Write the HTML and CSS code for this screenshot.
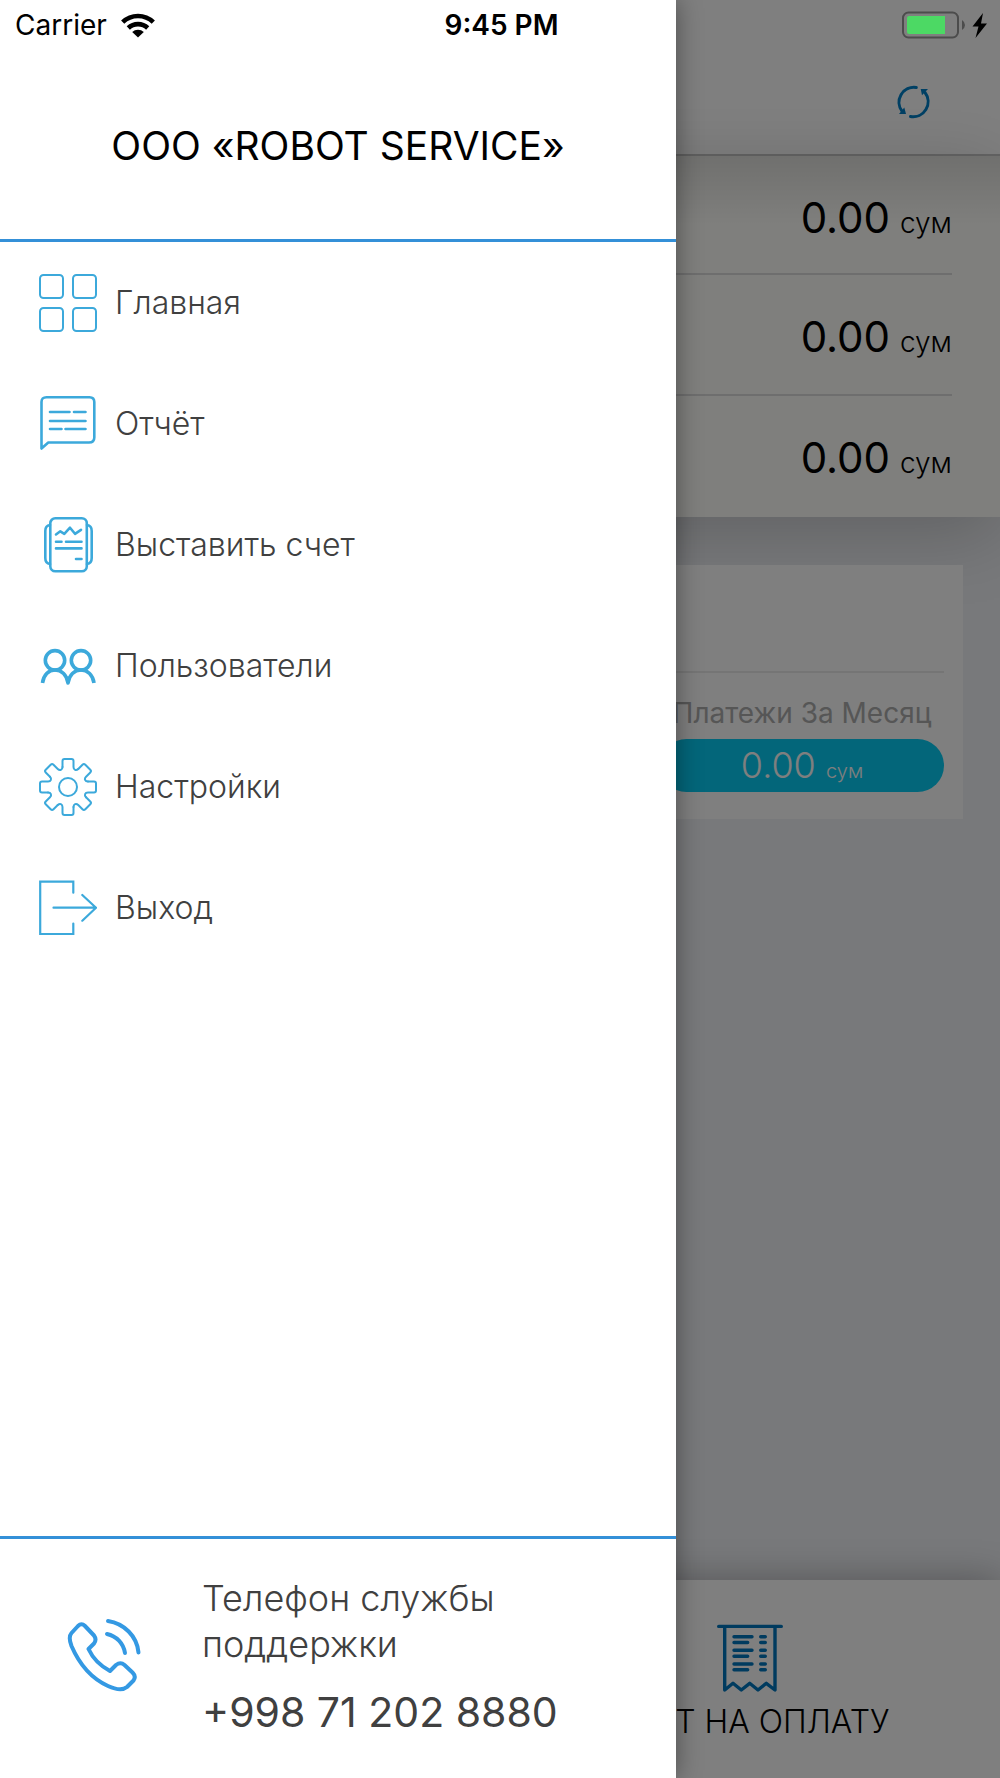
FILE: index.html
```html
<!DOCTYPE html>
<html lang="ru">
<head>
    <meta charset="UTF-8">
    <meta name="viewport" content="width=device-width, initial-scale=1.0">
    <title>ROBOT SERVICE</title>
    <link rel="stylesheet" href="styles.css">
</head>
<body>
    <div class="screen">
        <header class="topbar">
            <button class="refresh-btn" aria-label="Обновить">
                <svg width="40" height="36" viewBox="0 0 40 36" fill="none" stroke="#0080c8" stroke-width="3">
                    <path d="M22.3 3.4A15 15 0 0 0 8.2 27.5" stroke-linecap="round"/>
                    <path d="M16.5 32.4A15 15 0 0 0 31 8.5" stroke-linecap="round"/>
                    <path d="M5 30L12 30L10.3 23.5Z M26.7 5L34 5L28 11.3Z" fill="#0080c8" stroke="none"/>
                </svg>
            </button>
        </header>

        <section class="summary">
            <div class="amount">0.00 <small>сум</small></div>
            <div class="amount">0.00 <small>сум</small></div>
            <div class="amount">0.00 <small>сум</small></div>
        </section>

        <section class="card">
            <div class="card-head"></div>
            <div class="card-column">
                <div class="card-label">Платежи За Месяц</div>
                <div class="pill">0.00 <small>сум</small></div>
            </div>
        </section>

        <nav class="tabbar">
            <a class="tab" href="#invoice">
                <svg width="66" height="69" viewBox="0 0 66 69" fill="none" stroke="#0076be" stroke-width="3.4" stroke-linecap="round" stroke-linejoin="round">
                    <path d="M1.7 2.4H64.3M7.7 3V66L16 59.3L24.3 66L32.7 59.3L41 66L49.3 59.3L58 66V3"/>
                    <path d="M17 12.7H35M17 18.5H30.7M17 26.2H35M17 32.2H30.7M17 40H35M17 45.8H30.7"/>
                    <path d="M43.7 12.7H48.3M43.7 18.5H48.3M43.7 26.2H48.3M43.7 32.2H48.3M43.7 40H48.3M43.7 45.8H48.3"/>
                </svg>
                <span>СЧЕТ НА ОПЛАТУ</span>
            </a>
        </nav>
    </div>

    <div class="overlay"></div>

    <aside class="drawer">
        <div class="drawer-head">
            <h1>ООО «ROBOT SERVICE»</h1>
        </div>

        <nav class="menu">
            <a href="#home">
                <svg viewBox="0 0 58 58" stroke-width="2">
                    <rect x="1" y="1" width="23" height="23" rx="3.5"/>
                    <rect x="34" y="1" width="23" height="23" rx="3.5"/>
                    <rect x="1" y="34" width="23" height="23" rx="3.5"/>
                    <rect x="34" y="34" width="23" height="23" rx="3.5"/>
                </svg>
                Главная
            </a>
            <a href="#report">
                <svg viewBox="0 0 58 58" stroke-width="2.6">
                    <path d="M2.5 53.5V7Q2.5 2.2 7.5 2.2H50.5Q55.3 2.2 55.3 7V42.5Q55.3 47.5 50 47.5H9.3Z"/>
                    <path d="M11 17H30.5M35 17H46.5M11 26H46.5M11 34H22.5M26.5 34H46.5"/>
                </svg>
                Отчёт
            </a>
            <a href="#bill">
                <svg viewBox="0 0 58 58" stroke-width="2.6">
                    <rect x="11.3" y="2.3" width="36.5" height="53" rx="5"/>
                    <path d="M11 9Q6.3 9.5 6.3 15V42Q6.3 47.5 11 48M48 9Q52.7 9.5 52.7 15V42Q52.7 47.5 48 48"/>
                    <path d="M17 18.5L21.3 15.3L25.3 17.8L31 11.7L36 17.8L42 13.8"/>
                    <path d="M17 25.8H22.5M27 25.8H42.5M17 32.4H42.5M37 43H42.5"/>
                </svg>
                Выставить счет
            </a>
            <a href="#users">
                <svg viewBox="0 0 58 58" stroke-width="3.6">
                    <circle cx="16" cy="23.3" r="9.7"/>
                    <circle cx="42" cy="23.3" r="9.7"/>
                    <path stroke-linecap="butt" d="M3.5 46C4.5 38 9.5 33 16 33S28 38 29 46C30 38 35.5 33 42 33S54 38 55 46"/>
                </svg>
                Пользователи
            </a>
            <a href="#settings">
                <svg viewBox="0 0 58 58" stroke-width="2">
                    <defs>
                        <path id="tooth" d="M-5.5 -20V-26Q-5.5 -28 -3.5 -28H3.5Q5.5 -28 5.5 -26V-20C5.5 -17 8.1 -15.9 10.25 -18.03"/>
                    </defs>
                    <g transform="translate(29 29)">
                        <circle r="9"/>
                        <use href="#tooth"/>
                        <use href="#tooth" transform="rotate(45)"/>
                        <use href="#tooth" transform="rotate(90)"/>
                        <use href="#tooth" transform="rotate(135)"/>
                        <use href="#tooth" transform="rotate(180)"/>
                        <use href="#tooth" transform="rotate(225)"/>
                        <use href="#tooth" transform="rotate(270)"/>
                        <use href="#tooth" transform="rotate(315)"/>
                    </g>
                </svg>
                Настройки
            </a>
            <a href="#logout">
                <svg viewBox="0 0 58 58" stroke-width="2.2">
                    <path stroke-linejoin="miter" d="M34.3 13.7V2.7H1.2V55H34.3V44.5"/>
                    <path d="M14.5 28.7H57M43.3 16L57 28.7L43.3 41.7"/>
                </svg>
                Выход
            </a>
        </nav>

        <div class="support">
            <svg width="76" height="76" viewBox="0 0 76 76" fill="none" stroke="#3499e3" stroke-width="4" stroke-linecap="round" stroke-linejoin="round">
                <path d="M5.5 15L12 8Q15.5 4.5 19 8L28 17.5Q31 21.5 28 25.5L22.5 31Q29 45 44 53L50 47Q54.5 43.5 58.5 47L66.5 54.5Q70.5 58.5 67.5 62.5L61 69Q55 74 42 68Q18 57 5.5 28Q2 19 5.5 15Z"/>
                <path d="M42 3C58 5.5 71 18 72.5 34.5M41 16C50.5 18 57.5 25.5 59 35"/>
            </svg>
            <div>
                <p>Телефон службы поддержки</p>
                <a class="phone" href="tel:+998712028880">+998 71 202 8880</a>
            </div>
        </div>
    </aside>

    <div class="status">
        <div class="carrier">
            <span>Carrier</span>
            <svg width="34" height="25" viewBox="0 0 34 25" fill="none" stroke="#000" stroke-width="4.6">
                <path d="M1.7 9.2A22 22 0 0 1 32.3 9.2M7.3 15A14 14 0 0 1 26.7 15"/>
                <path d="M17 24.5L11.2 19A8.5 8.5 0 0 1 22.8 19Z" fill="#000" stroke="none"/>
            </svg>
        </div>
        <time>9:45 PM</time>
        <svg class="battery" width="86" height="28" viewBox="0 0 86 28">
            <rect x="1" y="1.5" width="55" height="25" rx="5.5" fill="none" stroke="#4c4c4c" stroke-width="2"/>
            <path d="M7 5H43V23H7Q5 23 5 21V7Q5 5 7 5Z" fill="#4cd964"/>
            <path d="M60 9Q63 11 63 14T60 19Z" fill="#4c4c4c"/>
            <path d="M81 2L70.5 15.5H76.5L73.5 27L85 12.5H79Z"/>
        </svg>
    </div>
</body>
</html>
```

FILE: styles.css
```css
* {
    box-sizing: border-box;
}
body {
    margin: 0;
    position: relative;
    min-height: 100vh;
    font-family: Inter, "Noto Sans", sans-serif;
    color: #000;
    overflow-x: hidden;
}
a {
    color: inherit;
    text-decoration: none;
}

/* main screen */
.screen {
    display: flex;
    flex-direction: column;
    min-height: 100vh;
    background: #f0f2f6;
}
.topbar {
    display: flex;
    justify-content: flex-end;
    align-items: flex-end;
    height: 156px;
    padding: 0 66px 34px 0;
    background: #fff;
    border-bottom: 2px solid #c8c8c8;
}
.refresh-btn {
    display: flex;
    padding: 0;
    border: none;
    background: none;
    cursor: pointer;
}
.summary {
    padding: 0 48px 2px;
    background: linear-gradient(rgba(0, 0, 0, 0.12), rgba(0, 0, 0, 0) 70px) #fffffb;
    box-shadow: 0 16px 70px rgba(0, 0, 0, 0.2);
}
.amount {
    height: 117px;
    padding-top: 36px;
    font-size: 42px;
    line-height: 52px;
    text-align: right;
}
.amount + .amount {
    height: 121px;
    border-top: 2px solid #dcdcdc;
}
.amount small {
    margin-left: -2px;
    font-size: 28px;
    font-weight: 300;
}
.card {
    display: flex;
    flex-direction: column;
    align-items: flex-end;
    margin: 48px 37px 0;
    padding: 0 19px 27px;
    background: #fff;
    opacity: 0.97;
}
.card-head {
    width: 100%;
    height: 108px;
    border-bottom: 2px solid #ebebeb;
}
.card-column {
    width: 284px;
    text-align: center;
}
.card-label {
    padding: 22px 0 8px;
    font-size: 28px;
    line-height: 36px;
    color: #aaa;
}
.pill {
    height: 53px;
    border-radius: 27px;
    background: #00ccf5;
    color: #fff;
    font-size: 36px;
    font-weight: 300;
    line-height: 53px;
}
.pill small {
    font-size: 20px;
}
.tabbar {
    display: flex;
    justify-content: flex-end;
    margin-top: auto;
    background: #fff;
    box-shadow: 0 0 36px rgba(0, 0, 0, 0.3);
}
.tab {
    display: flex;
    flex-direction: column;
    align-items: center;
    gap: 8px;
    width: 50%;
    padding: 44px 0 35px;
    font-size: 32px;
    font-weight: 300;
    line-height: 42px;
    white-space: nowrap;
}

.overlay {
    position: absolute;
    inset: 0;
    background: rgba(0, 0, 0, 0.5);
}

/* side menu */
.drawer {
    position: absolute;
    top: 0;
    bottom: 0;
    left: 0;
    display: flex;
    flex-direction: column;
    width: 67.6%;
    background: #fff;
    box-shadow: 0 0 24px rgba(0, 0, 0, 0.4);
}
.drawer-head {
    padding: 122px 0 69px;
    border-bottom: 3px solid #3490d8;
}
.drawer-head h1 {
    margin: 0;
    font-size: 39px;
    font-weight: 400;
    line-height: 48px;
    text-align: center;
}
.menu a {
    display: flex;
    align-items: center;
    gap: 18px;
    height: 121px;
    padding-left: 39px;
    font-size: 32px;
    font-weight: 300;
    color: #404040;
}
.menu svg {
    width: 58px;
    height: 58px;
    fill: none;
    stroke: #3ca9db;
    stroke-linecap: round;
    stroke-linejoin: round;
}
.support {
    display: flex;
    align-items: center;
    gap: 60px;
    margin-top: auto;
    padding: 36px 66px 41px;
    border-top: 3px solid #3490d8;
    color: #404040;
}
.support svg {
    flex: none;
}
.support p {
    margin: 0 0 20px;
    font-size: 36px;
    font-weight: 300;
    line-height: 46px;
}
.phone {
    font-size: 41px;
    line-height: 50px;
    white-space: nowrap;
}

/* status bar lies over both layers */
.status {
    position: absolute;
    top: 0;
    left: 0;
    right: 0;
    display: grid;
    grid-template-columns: 1fr auto 1fr;
    align-items: center;
    height: 50px;
    padding: 0 12px 0 15px;
    font-size: 28px;
}
.carrier {
    display: flex;
    align-items: center;
    gap: 14px;
}
.status time {
    font-weight: 600;
}
.battery {
    justify-self: end;
}
```
